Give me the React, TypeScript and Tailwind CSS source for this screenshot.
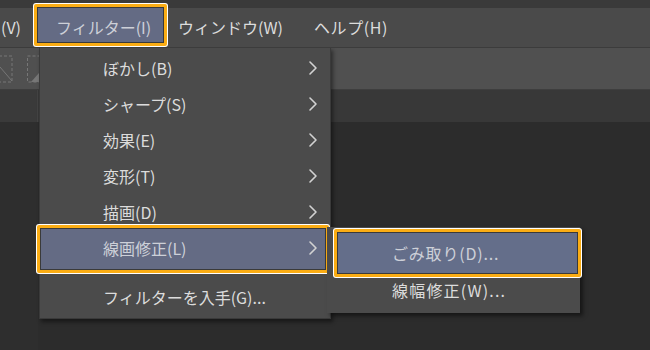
import React from "react";

const Chevron = () => (
  <svg width="10" height="16" viewBox="0 0 10 16" className="block">
    <path d="M2 2 L8 8 L2 14" fill="none" stroke="#d2d2d2" strokeWidth="1.6" strokeLinecap="round" strokeLinejoin="round" />
  </svg>
);

const Row = ({ label, chevron = true, h = "h-[36px]" }: { label: string; chevron?: boolean; h?: string }) => (
  <div className={`relative z-10 flex ${h} items-center pl-[63px] pr-[12px]`}>
    <span className="flex-1 whitespace-nowrap">{label}</span>
    {chevron && <Chevron />}
  </div>
);

export default function App() {
  return (
    <div
      className="relative h-[350px] w-[650px] overflow-hidden bg-[#2c2c2c] text-[16px] leading-none text-[#dcdcdc]"
      style={{ fontFamily: "'Noto Sans CJK JP', 'Noto Sans', sans-serif" }}
    >
      {/* top strip */}
      <div className="h-[8px] bg-[#3a3a3a]" />

      {/* menu bar */}
      <div className="relative z-40 flex h-[40px] items-center border-b border-[#3c3c3c] bg-[#4a4a4a] pb-[2px]">
        <div className="absolute left-[34px] top-[-4px] h-[42px] w-[133px] rounded-[2px] border-[3px] border-[#fbad14] bg-[#646b84] shadow-[0_0_0_1px_#ffffff,inset_0_0_0_1px_#3a3a3a]" />
        <span className="relative z-10 w-[56px] whitespace-nowrap pl-[1px]">(V)</span>
        <span className="relative z-10 w-[122px] whitespace-nowrap text-[#cdd0d8]">フィルター(I)</span>
        <span className="relative z-10 w-[136px] whitespace-nowrap">ウィンドウ(W)</span>
        <span className="relative z-10 whitespace-nowrap tracking-[0.6px]">ヘルプ(H)</span>
      </div>

      {/* tool bar */}
      <div className="flex h-[41px] items-center gap-[14px] bg-[#505050] pl-0">
        <svg width="13" height="28" viewBox="0 0 13 28">
          <rect x="-6" y="1" width="18" height="26" fill="none" stroke="#777" strokeWidth="1" strokeDasharray="3 2" />
          <path d="M0 12 L12 26" stroke="#777" strokeWidth="1" />
        </svg>
        <svg width="13" height="28" viewBox="0 0 13 28">
          <rect x="0.5" y="1" width="14" height="26" fill="none" stroke="#777" strokeWidth="1" strokeDasharray="3 2" />
          <path d="M12 18 L12 27 L4 27 Z" fill="#777" />
        </svg>
      </div>

      {/* secondary strip */}
      <div className="flex h-[33px] border-t border-[#3e3e3e] bg-[#383838]">
        <div className="w-[38px] border-r border-[#444] bg-[#3a3a3a]" />
      </div>

      {/* workspace */}
      <div className="flex h-[228px]">
        <div className="w-[38px] bg-[#2e2e2e]" />
      </div>

      {/* dropdown menu */}
      <div className="absolute left-[39px] top-[47px] z-30 h-[272px] w-[292px] border border-[#3a3a3a] bg-[#4b4b4b] pt-[2px] shadow-[2px_3px_4px_rgba(0,0,0,0.45)]">
        <div className="absolute left-[-3px] top-[177px] h-[48px] w-[292px] rounded-[2px] border-[3px] border-[#fbad14] bg-[#646b84] shadow-[0_0_0_1px_#ffffff,inset_0_0_0_1px_#3a3a3a]" />
        <Row label="ぼかし(B)" />
        <Row label="シャープ(S)" />
        <Row label="効果(E)" />
        <Row label="変形(T)" />
        <Row label="描画(D)" />
        <div className="relative z-10 flex h-[36px] items-center pl-[63px] pr-[12px] text-[#cdd0d8]">
          <span className="flex-1 whitespace-nowrap">線画修正(L)</span>
          <Chevron />
        </div>
        <div className="h-[13px]" />
        <Row label="フィルターを入手(G)..." chevron={false} />
      </div>

      {/* submenu */}
      <div className="absolute left-[327px] top-[227px] z-30 h-[86px] w-[253px] bg-[#4b4b4b] shadow-[3px_3px_4px_rgba(0,0,0,0.5)]">
        <div className="absolute left-[7px] top-[2px] h-[48px] w-[247px] rounded-[2px] border-[3px] border-[#fbad14] bg-[#646e8a] shadow-[0_0_0_1px_#ffffff,inset_0_0_0_1px_#3a3a3a]" />
        <div className="relative z-10 flex h-[44px] items-center pl-[65px] pt-[8px] text-[#cdd0d8]">
          <span className="whitespace-nowrap tracking-[0.8px]">ごみ取り(D)...</span>
        </div>
        <div className="relative z-10 flex h-[36px] items-center pl-[65px] pt-[2px]">
          <span className="whitespace-nowrap tracking-[1.2px]">線幅修正(W)...</span>
        </div>
      </div>
    </div>
  );
}
